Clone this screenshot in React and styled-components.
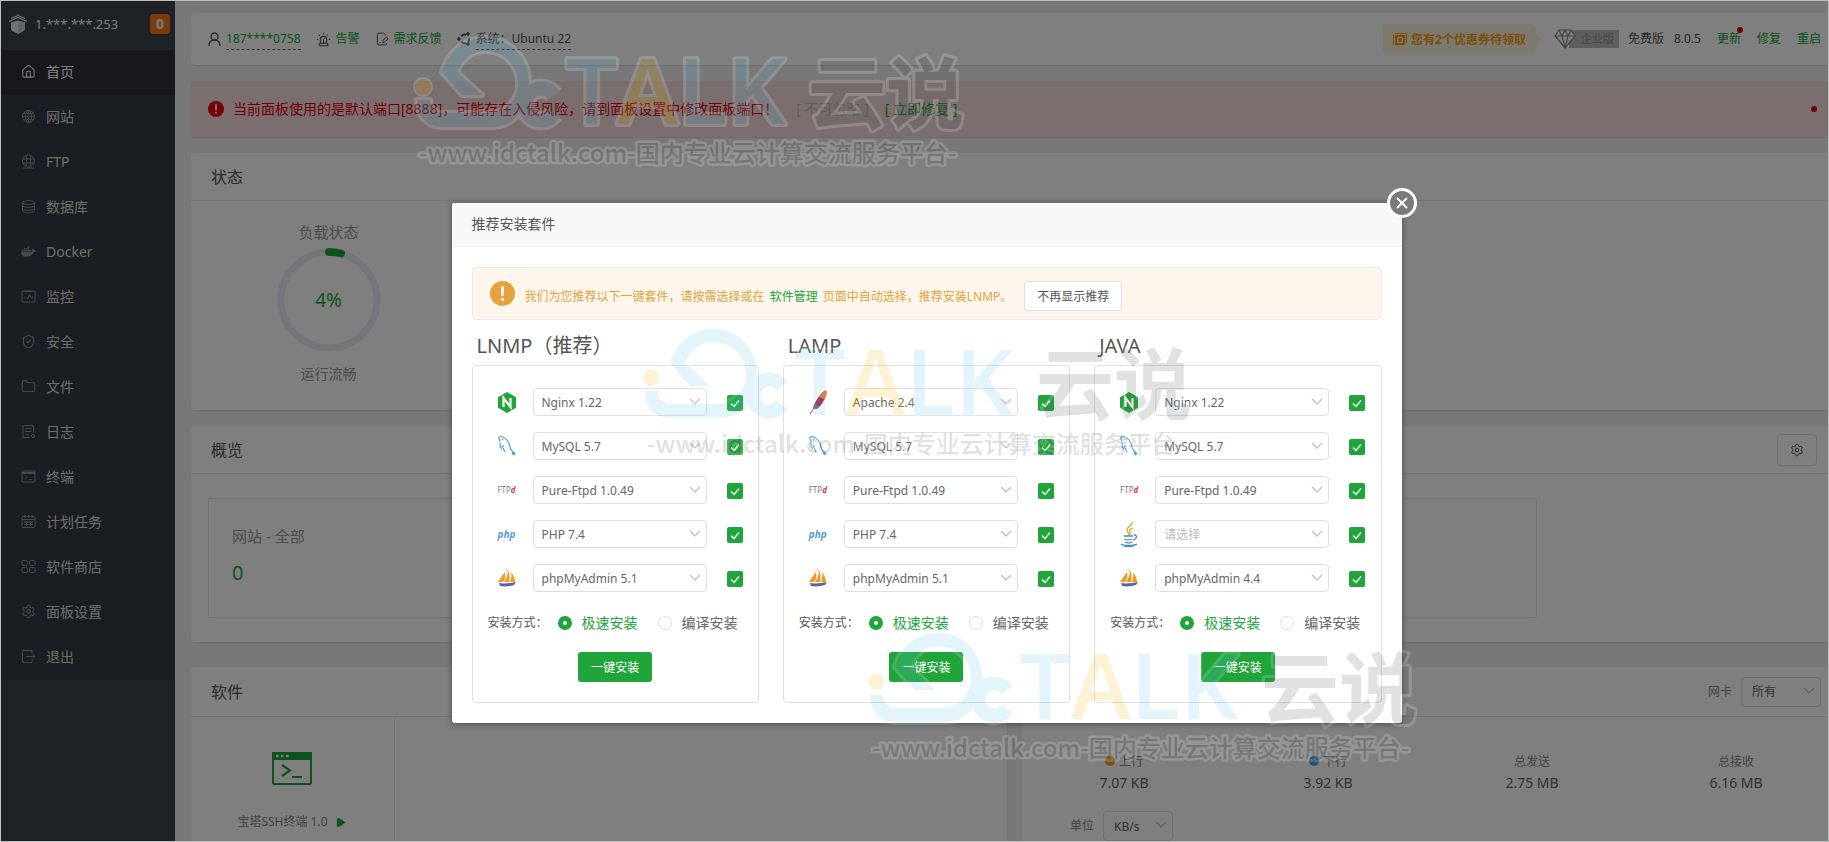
import React from "react";
import styled, { createGlobalStyle, css } from "styled-components";
import { House, ShieldCheck, Folder, Settings, Siren, FilePenLine, X, Play } from "lucide-react";
import { FaDocker } from "react-icons/fa";

const GREEN = "#20a53a";

const GlobalStyle = createGlobalStyle`
  * { box-sizing: border-box; }
  body {
    margin: 0;
    font-family: "Noto Sans", "Noto Sans CJK SC", sans-serif;
    font-size: 12px;
    line-height: 20px;
    color: #555;
    background: #f0f0f0;
  }
  button, select, input { font-family: inherit; font-size: inherit; margin: 0; }
  h1, h2, h3, p, ul { margin: 0; padding: 0; font-weight: 400; }
  a { color: inherit; text-decoration: none; }
  svg { flex: none; display: block; }
`;

const Frame = styled.div`
  position: relative;
  display: flex;
  height: 100vh;
  overflow: hidden;
  border: 1px solid #bcc0bf;
  background: #f0f0f0;
`;

/* Sidebar */
const Sidebar = styled.aside`
  flex: none;
  width: 174px;
  background: #3c444d;
`;
const Host = styled.div`
  display: flex;
  align-items: center;
  height: 49px;
  padding: 0 5px 4px 8px;
  color: #f5f5f5;
  font-size: 14px;
  & > span { margin-left: 8px; flex: 1; font-size: 13px; }
`;
const Badge = styled.b`
  width: 20px;
  height: 20px;
  border-radius: 4px;
  background: #ff7516;
  text-align: center;
`;
const Menu = styled.ul`
  list-style: none;
  background: #353d44;
`;
const MenuLink = styled.a`
  display: flex;
  align-items: center;
  gap: 10px;
  height: 45px;
  padding: 0 0 2px 20px;
  font-size: 14px;
  color: ${(p) => (p.$active ? "#fff" : "#dadada")};
  background: ${(p) => (p.$active ? "#2c3036" : "transparent")};
  svg { color: ${(p) => (p.$active ? "#eee" : "#8d9096")}; }
`;

/* Page */
const Main = styled.main`
  flex: 1;
  min-width: 0;
  margin-right: -10px;
  padding: 12px 0 0 16px;
`;
const Card = styled.section`
  background: #fff;
  border-radius: 4px;
  box-shadow: 0 1px 1px #d8d8d8;
  margin-bottom: ${(p) => p.$gap || 16}px;
  height: ${(p) => p.$h}px;
`;
const CardHead = styled.header`
  display: flex;
  align-items: center;
  justify-content: space-between;
  height: ${(p) => p.$h || 48}px;
  padding: 0 ${(p) => p.$right || 20}px 0 20px;
  border-bottom: 1px solid #e6e6e6;
  h2 { font-size: 16px; color: #555; }
`;
const TopBar = styled(Card)`
  display: flex;
  align-items: center;
  padding: 0 17px;
`;
const InfoItem = styled.div`
  display: flex;
  align-items: center;
  gap: 5px;
  margin-right: 15px;
`;
const GreenLink = styled.a`
  position: relative;
  color: ${GREEN};
  ${(p) => p.$dashed && css`border-bottom: 1px dashed ${GREEN};`}
`;
const SystemName = styled.span`
  border-bottom: 1px dashed #666;
`;
const RightTools = styled.div`
  display: flex;
  align-items: center;
  margin-left: auto;
  color: #555;
`;
const Coupon = styled.button`
  position: relative;
  display: flex;
  align-items: center;
  gap: 4px;
  height: 30px;
  padding: 0 10px;
  margin-right: 18px;
  border: 0;
  border-radius: 4px;
  background: #fdf3de;
  color: #f2a012;
  font-weight: 700;
  &::after {
    content: "";
    position: absolute;
    left: 100%;
    top: 9px;
    border: 6px solid transparent;
    border-left-color: #fdf3de;
    border-right: 0;
  }
`;
const Edition = styled.span`
  display: flex;
  align-items: center;
  isolation: isolate;
  color: #999;
  margin-right: 9px;
  b {
    display: block;
    height: 18px;
    line-height: 17px;
    padding: 0 5px 0 12px;
    margin-left: -7px;
    background: #bdbdbd;
    color: #8f8f8f;
    font-size: 11px;
    font-weight: 400;
  }
  svg { z-index: 1; }
`;
const Version = styled.span`
  margin-right: ${(p) => p.$gap}px;
`;
const Links = styled.nav`
  display: flex;
  gap: 16px;
`;
const Dot = styled.i`
  width: 6px;
  height: 6px;
  border-radius: 50%;
  background: #e60012;
  ${(p) => p.$corner && css`position: absolute; right: -2px; top: -2px;`}
`;
const Warning = styled(Card)`
  display: flex;
  align-items: center;
  padding: 0 21px 0 17px;
  background: #f5dfdd;
  color: #e60012;
  font-size: 14px;
  p { margin-left: 9px; }
  span { color: #c4bcbc; margin: 0 16px 0 18px; }
  a { flex: 1; }
`;
const Load = styled.div`
  display: flex;
  flex-direction: column;
  align-items: center;
  width: 275px;
  padding-top: 21px;
  color: #999;
  font-size: 14px;
  h3 { font-size: 15px; }
`;
const Gauge = styled.div`
  display: grid;
  place-items: center;
  margin: 6px 0 12px;
  color: ${GREEN};
  font-size: 19px;
  & > * { grid-area: 1 / 1; }
`;
const GearButton = styled.button`
  display: grid;
  place-items: center;
  width: 40px;
  height: 32px;
  border: 1px solid #dcdfe6;
  border-radius: 4px;
  background: #fff;
  color: #555;
`;
const StatGrid = styled.div`
  margin: 24px 301px 0 17px;
`;
const Stat = styled.div`
  height: 120px;
  padding: 27px 23px;
  border: 1px solid #e8e8e8;
  border-radius: 2px;
  font-size: 15px;
  color: #999;
  strong {
    display: block;
    margin-top: 17px;
    font-size: 20px;
    font-weight: 400;
    color: ${GREEN};
  }
`;
const Bottom = styled.div`
  display: grid;
  grid-template-columns: 1fr 1fr;
  gap: 15px;
`;
const AppTile = styled.a`
  display: flex;
  flex-direction: column;
  align-items: center;
  width: 204px;
  height: 160px;
  padding: 35px 2px 0 0;
  border-right: 1px solid #e8e8e8;
  color: #888;
  span { display: flex; align-items: center; gap: 7px; margin-top: 27px; }
`;
const Field = styled.label`
  display: flex;
  align-items: center;
  gap: 9px;
  color: #888;
`;
const UnitRow = styled.div`
  display: flex;
  padding: 18px 0 0 48px;
`;
const Traffic = styled.div`
  display: grid;
  grid-template-columns: repeat(4, 1fr);
  padding-top: 35px;
  text-align: center;
  color: #888;
  strong { display: block; margin-top: 1px; font-size: 14px; font-weight: 400; color: #666; }
`;
const Legend = styled.i`
  display: inline-block;
  width: 10px;
  height: 10px;
  margin-right: 4px;
  border-radius: 50%;
  background: ${(p) => p.$color};
`;

/* Select box */
const SelectWrap = styled.span`
  position: relative;
  display: block;
  width: ${(p) => p.$w}px;
  select {
    appearance: none;
    display: block;
    width: 100%;
    height: ${(p) => p.$h || 28}px;
    padding: 0 24px 0 ${(p) => p.$pad || 8}px;
    border: 1px solid #dcdfe6;
    border-radius: 4px;
    background: #fff;
    color: ${(p) => (p.$empty ? "#bbb" : "#666")};
  }
  svg {
    position: absolute;
    right: 6px;
    top: 10px;
    pointer-events: none;
  }
`;

/* Modal */
const Overlay = styled.div`
  position: absolute;
  inset: 0;
  display: flex;
  justify-content: center;
  align-items: flex-start;
  padding: 202px 0 0 24px;
  background: rgba(0, 0, 0, 0.5);
`;
const Dialog = styled.div`
  position: relative;
  width: 950px;
  border-radius: 3px;
  background: #fff;
  box-shadow: 0 1px 6px rgba(0, 0, 0, 0.4);
`;
const DialogTitle = styled.h1`
  height: 44px;
  padding-left: 20px;
  line-height: 42px;
  font-size: 14px;
  border-bottom: 1px solid #eee;
  border-radius: 3px 3px 0 0;
  background: #f8f8f8;
`;
const Close = styled.button`
  position: absolute;
  right: -15px;
  top: -15px;
  display: grid;
  place-items: center;
  width: 30px;
  height: 30px;
  padding: 0;
  border: 3px solid #fff;
  border-radius: 50%;
  background: #7b7b7b;
  color: #fff;
`;
const DialogBody = styled.div`
  padding: 20px;
`;
const Notice = styled.div`
  display: flex;
  align-items: center;
  height: 53px;
  padding: 0 17px;
  border: 1px solid #ececec;
  border-radius: 4px;
  background: #fdf6ec;
  color: #e6a23c;
  p { margin: 6px 12px 0 10px; }
  a { color: ${GREEN}; margin: 0 2px; }
`;
const PlainButton = styled.button`
  height: 30px;
  width: 98px;
  margin-top: 4px;
  padding: 0;
  border: 1px solid #dcdfe6;
  border-radius: 3px;
  background: #fff;
  color: #555;
`;
const Suites = styled.div`
  display: grid;
  grid-template-columns: repeat(3, minmax(0, 1fr));
  gap: 24px;
  h2 { font-size: 20px; line-height: 28px; padding-left: 5px; margin: 12px 0 5px; }
`;
const SuiteBox = styled.div`
  padding: 22px 15px 20px;
  border: 1px solid #dcdfe6;
  border-radius: 4px;
`;
const Row = styled.div`
  display: flex;
  align-items: center;
  margin-bottom: 16px;
`;
const LogoCell = styled.span`
  display: grid;
  place-items: center;
  width: 38px;
  height: 28px;
  margin-right: 7px;
`;
const FtpMark = styled.span`
  font-size: 8px;
  color: #777;
  i { color: #e2343f; font-weight: 700; }
`;
const PhpMark = styled.i`
  font-size: 10px;
  font-weight: 700;
  color: #5a9bd5;
`;
const Tick = styled.span`
  position: relative;
  display: block;
  width: 16px;
  height: 16px;
  margin: 2px 0 0 20px;
  input {
    appearance: none;
    display: block;
    width: 16px;
    height: 16px;
    border-radius: 2px;
    background: ${GREEN};
  }
  svg { position: absolute; left: 2px; top: 2px; pointer-events: none; }
`;
const ModeRow = styled.div`
  display: flex;
  align-items: center;
  height: 20px;
  margin: 21px 0 19px;
  & > span { width: 70px; }
`;
const Radio = styled.label`
  display: flex;
  align-items: center;
  gap: 10px;
  margin-right: 20px;
  white-space: nowrap;
  font-size: 14px;
  color: ${(p) => (p.$on ? GREEN : "#666")};
  &:last-child { margin-right: 0; }
  input {
    appearance: none;
    width: 14px;
    height: 14px;
    border: 1px solid #dcdfe6;
    border-radius: 50%;
    background: #fff;
  }
  input:checked { border: 5px solid ${GREEN}; }
`;
const Install = styled.button`
  display: block;
  width: 74px;
  height: 30px;
  margin: 0 auto;
  padding: 0;
  border: 0;
  border-radius: 3px;
  background: ${GREEN};
  color: #fff;
`;
const Watermark = styled.svg`
  position: absolute;
  left: ${(p) => p.$x}px;
  top: ${(p) => p.$y}px;
  overflow: visible;
  opacity: 0.17;
  pointer-events: none;
`;

/* Drawings */
const Line = ({ size = 15, children }) => (
  <svg width={size} height={size} viewBox="0 0 15 15" fill="none" stroke="currentColor" strokeWidth="1">
    {children}
  </svg>
);
const SiteIcon = () => (
  <Line>
    <circle cx="7.500" cy="7.500" r="6" />
    <ellipse cx="7.500" cy="7.500" rx="3" ry="6" />
    <path d="M7.500 1.500v12M1.500 7.500h12M2.500 4.500h10M2.500 10.500h10" />
  </Line>
);
const FtpIcon = () => (
  <Line>
    <circle cx="7.500" cy="7" r="6" />
    <path d="M5.500 1.500v11M9.500 1.500v11M2 5h11M2 9h11M2 14h11" />
  </Line>
);
const DatabaseIcon = () => (
  <Line>
    <ellipse cx="7.500" cy="3.500" rx="6" ry="2" />
    <path d="M1.500 3.500v8c0 3 12 3 12 0v-8M1.500 6.500c0 2.500 12 2.500 12 0M1.500 9.500c0 2.500 12 2.500 12 0" />
  </Line>
);
const MonitorIcon = () => (
  <Line>
    <rect x="1" y="2" width="13" height="11" rx="1" />
    <path d="M4 2.500h7M2.500 9.500l2-1.500 2 2 2-4 2 3 2-1" />
  </Line>
);
const LogIcon = () => (
  <Line>
    <path d="M9 13.500H2v-12h10.500v7M4.500 4.500h6M4.500 7.500h6M4.500 10.500h3" />
    <circle cx="12" cy="12" r="1.500" />
  </Line>
);
const TermIcon = () => (
  <Line>
    <rect x="1" y="2" width="13" height="11" rx="1" />
    <path d="M1 4h13" strokeWidth="2" />
    <path d="M4 6.500l2 2-2 2M8 10.500h3" />
  </Line>
);
const CronIcon = () => (
  <Line>
    <rect x="1" y="2.500" width="13" height="11" rx="1" />
    <path d="M1 5.500h13M4 1v3M7.500 1v3M11 1v3M3 8h9M3 10.500h9M5.500 7v5M9.500 7v5" />
  </Line>
);
const StoreIcon = () => (
  <Line>
    <rect x="1" y="1.500" width="5.500" height="5" rx="1" />
    <rect x="8.500" y="1.500" width="5.500" height="5" rx="1" />
    <rect x="1" y="8.500" width="5.500" height="5" rx="1" />
    <rect x="8.500" y="8.500" width="5.500" height="5" rx="1" />
  </Line>
);
const ExitIcon = () => (
  <Line>
    <path d="M11 4.500v-3H1.500v12H11v-3M5 7.500h9M11.500 5l2.500 2.500-2.500 2.500" />
  </Line>
);
const UserIcon = () => (
  <svg width="13" height="15" viewBox="0 0 13 15" fill="none" stroke="#555" strokeWidth="1.300">
    <circle cx="6.500" cy="4.500" r="3.500" />
    <path d="M1 14c0-4 2-6 5.500-6S12 10 12 14" />
  </svg>
);
const CouponIcon = () => (
  <svg width="14" height="12" viewBox="0 0 14 12" fill="currentColor">
    <path d="M0 2h1v10H0zM2 0h12v1H2zM13 1h1v9h-1z" />
    <path d="M2 2h10v10H2z" />
    <path d="M4.500 4.500h5v5h-5z" fill="none" stroke="#fff" strokeWidth="1" />
    <path d="M6.500 6.500h1v1h-1z" fill="#fff" />
  </svg>
);
const Diamond = () => (
  <svg width="22" height="20" viewBox="0 0 22 20" fill="#fff" stroke="#8c8c8c" strokeWidth="1.200">
    <path d="M5 1h12l4 6-10 12L1 7z" />
    <path d="M1 7h20M5 1l3 6 3-6 3 6 3-6M8 7l3 12 3-12" fill="none" />
  </svg>
);
const Chevron = () => (
  <svg width="12" height="7" viewBox="0 0 12 7" fill="none" stroke="#b8bcc4" strokeWidth="1.200">
    <path d="M1 1l5 5 5-5" />
  </svg>
);
const CheckMark = () => (
  <svg width="12" height="12" viewBox="0 0 12 12" fill="none" stroke="#fff" strokeWidth="1.300">
    <path d="M2 6.500l3 3 5-6" />
  </svg>
);
const ShieldLogo = () => (
  <svg width="18" height="20" viewBox="0 0 18 20">
    <path d="M9 0v2M2 4.500l7-3 7 3M0 7.500l9-4 9 4" stroke="#ddd" strokeWidth="1.300" fill="none" />
    <path d="M2 8.500L9 6.500l7 2v6.500c0 2-4 3-7 5-3-2-7-3-7-5z" fill="#e6e6e6" />
    <path d="M9 6.500l7 2v6.500c0 2-4 3-7 5z" fill="#c4c4c4" />
  </svg>
);
const UbuntuMark = () => (
  <svg width="14" height="14" viewBox="0 0 14 14" fill="none" stroke="#555">
    <path d="M4.300 4.500A4.300 4.300 0 0 1 9 2.800M12.200 6.200A4.300 4.300 0 0 1 10.800 10M8.600 11.200A4.300 4.300 0 0 1 4.300 9.500" strokeWidth="2" />
    <circle cx="1.900" cy="7" r="1.300" fill="#555" />
    <circle cx="11" cy="1.900" r="1.300" fill="#555" />
    <circle cx="11" cy="12" r="1.300" fill="#555" />
  </svg>
);
const Alarm = ({ size, color }) => (
  <svg width={size} height={size} viewBox="0 0 24 24">
    <circle cx="12" cy="12" r="12" fill={color} />
    <path d="M12 6v7" stroke="#fff" strokeWidth="2.600" strokeLinecap="round" />
    <circle cx="12" cy="17.500" r="1.500" fill="#fff" />
  </svg>
);
const TerminalArt = () => (
  <svg width="40" height="33" viewBox="0 0 40 33">
    <rect x="1" y="1" width="38" height="31" rx="1" fill="none" stroke={GREEN} strokeWidth="2" />
    <path d="M0 0h40v8H0z" fill={GREEN} />
    <path d="M4 4h2.500M9 4h2.500M14 4h2.500" stroke="#fff" strokeWidth="2.500" />
    <path d="M10 13l8 5.500-8 5.500M20 25h10" fill="none" stroke={GREEN} strokeWidth="2.200" />
  </svg>
);
const Nginx = () => (
  <svg width="18" height="21" viewBox="0 0 18 21">
    <path d="M9 0l9 5.200v10.600L9 21 0 15.800V5.200z" fill={GREEN} />
    <path d="M5.500 15V6l7 9V6" fill="none" stroke="#fff" strokeWidth="2.200" />
  </svg>
);
const Apache = () => (
  <svg width="18" height="25" viewBox="0 0 18 25">
    <path d="M17 0c2 4-2 12-8 18l-5 1c0-5 8-17 13-19z" fill="#b01c3f" />
    <path d="M17 0c2 3 0 6-2 9l-5-2c2-3 5-6 7-7z" fill="#e8702a" />
    <path d="M4 19c0-2 1-4 2-6l4 4-2 2z" fill="#8a5a86" />
    <path d="M11 9L1 24" stroke="#74506f" strokeWidth="1" />
  </svg>
);
const Mysql = () => (
  <svg width="18" height="20" viewBox="0 0 18 20" fill="none" stroke="#3a9bd8" strokeWidth="1.100">
    <path d="M1 1c4-1 8 2 10 6 1 3 1 6 3 8 1 1 3 2 3 3l-3-1 2 2" />
    <path d="M1 1c-1 2 1 3 1 5 0 3 0 5 1 7l2-3c0 3 1 4 2 6" strokeDasharray="5 1" />
    <path d="M4 3l1 1" />
  </svg>
);
const Java = () => (
  <svg width="18" height="25" viewBox="0 0 18 25" fill="none" strokeWidth="1.300">
    <path d="M12 0c1 4-6 5-5 8 0 2 2 3 2 5M13 6c-3 1-4 2-3 4s0 2-1 3" stroke="#f09a1c" />
    <path d="M4 14h9M4 17c2 1 6 1 8 0M5 20c2 1 5 1 7 0M14 13c4 0 3 4-1 5M1 22c2 2 13 2 16 0M4 24c4 1 9 0 11-1" stroke="#3c8fd0" />
  </svg>
);
const Boat = () => (
  <svg width="18" height="18" viewBox="0 0 18 18">
    <path d="M7 3c1 4 0 8-2 10H0c2-3 4-6 7-10zM10 1c2 4 2 8 1 12H6c3-4 4-8 4-12zM13 3c3 4 4 7 4 10h-5c1-4 2-6 1-10z" fill="#f59a1d" />
    <path d="M5 0c3-1 5 1 4 3" stroke="#bbb" fill="none" />
    <path d="M1 14c5 1 12 0 17-1l-2 3c-4 1-9 2-14 1z" fill="#5d62a6" />
  </svg>
);

const D_SHAPE =
  "M27 35C33 14 50 1 70 1C95 1 114 21 114 45C114 70 100 90 76 90H26C12 90 2 78 2 63H15C15 71 20 76 28 76H74C92 76 103 62 103 46C103 28 89 14 70 14C58 14 47 22 42 35L67 58H47Z";
const C_SHAPE = "M139 58A16 16 0 1 0 139 77";

function Brand({ x, y }) {
  return (
    <Watermark $x={x} $y={y} width="550" height="135" aria-hidden="true">
      <g fill="none" stroke="#fff" strokeLinejoin="round">
        <path d={D_SHAPE} strokeWidth="6" />
        <path d={C_SHAPE} strokeWidth="20" />
        <circle cx="8" cy="50" r="7" strokeWidth="6" />
      </g>
      <path d={D_SHAPE} fill="#62c4ea" />
      <path d={C_SHAPE} fill="none" stroke="#62c4ea" strokeWidth="14" />
      <circle cx="8" cy="50" r="8" fill="#fbb905" />
      <g stroke="#fff" strokeLinejoin="round" paintOrder="stroke" fontWeight="700">
        <text x="151" y="87" fontSize="91" fontWeight="600" fontFamily="Open Sans, sans-serif" fill="#62c4ea" strokeWidth="6">
          T<tspan fill="#fbb905">A</tspan>LK
        </text>
        <g fontFamily="Noto Sans CJK SC, sans-serif" fill="#555">
          <text x="393" y="86" fontSize="78" strokeWidth="6">云说</text>
          <text x="4" y="125" fontSize="24" fontWeight="500" strokeWidth="5">-www.idctalk.com-国内专业云计算交流服务平台-</text>
        </g>
      </g>
    </Watermark>
  );
}

const MENU = [
  ["首页", House], ["网站", SiteIcon], ["FTP", FtpIcon], ["数据库", DatabaseIcon],
  ["Docker", FaDocker], ["监控", MonitorIcon], ["安全", ShieldCheck],
  ["文件", Folder], ["日志", LogIcon], ["终端", TermIcon],
  ["计划任务", CronIcon], ["软件商店", StoreIcon], ["面板设置", Settings],
  ["退出", ExitIcon],
];

const ftp = <FtpMark>FTP<i>d</i></FtpMark>;
const php = <PhpMark>php</PhpMark>;
const SUITES = [
  ["LNMP（推荐）", [[<Nginx />, "Nginx 1.22"], [<Mysql />, "MySQL 5.7"], [ftp, "Pure-Ftpd 1.0.49"], [php, "PHP 7.4"], [<Boat />, "phpMyAdmin 5.1"]]],
  ["LAMP", [[<Apache />, "Apache 2.4"], [<Mysql />, "MySQL 5.7"], [ftp, "Pure-Ftpd 1.0.49"], [php, "PHP 7.4"], [<Boat />, "phpMyAdmin 5.1"]]],
  ["JAVA", [[<Nginx />, "Nginx 1.22"], [<Mysql />, "MySQL 5.7"], [ftp, "Pure-Ftpd 1.0.49"], [<Java />, ""], [<Boat />, "phpMyAdmin 4.4"]]],
];
const TRAFFIC = [
  ["上行", "7.07 KB", "#f5a623"], ["下行", "3.92 KB", "#4aa3ec"],
  ["总发送", "2.75 MB"], ["总接收", "6.16 MB"],
];

function Select({ value, label, w, h, pad }) {
  return (
    <SelectWrap $w={w} $h={h} $pad={pad} $empty={!value}>
      <select aria-label={label} defaultValue={value || "请选择"}>
        <option>{value || "请选择"}</option>
      </select>
      <Chevron />
    </SelectWrap>
  );
}

function Suite({ title, items }) {
  return (
    <section>
      <h2>{title}</h2>
      <SuiteBox>
        {items.map(([logo, value], i) => (
          <Row key={i}>
            <LogoCell>{logo}</LogoCell>
            <Select value={value} label={`${title} ${value || "Java"}`} w={174} />
            <Tick>
              <input type="checkbox" defaultChecked aria-label={value || "Java"} />
              <CheckMark />
            </Tick>
          </Row>
        ))}
        <ModeRow>
          <span>安装方式：</span>
          <Radio $on><input type="radio" name={title} defaultChecked />极速安装</Radio>
          <Radio><input type="radio" name={title} />编译安装</Radio>
        </ModeRow>
        <Install>一键安装</Install>
      </SuiteBox>
    </section>
  );
}

export default function App() {
  return (
    <Frame>
      <GlobalStyle />
      <Sidebar>
        <Host><ShieldLogo /><span>1.***.***.253</span><Badge>0</Badge></Host>
        <Menu>
          {MENU.map(([name, Icon], i) => (
            <li key={name}>
              <MenuLink href="#" $active={i === 0}><Icon size={15} strokeWidth={1.7} />{name}</MenuLink>
            </li>
          ))}
        </Menu>
      </Sidebar>

      <Main>
        <TopBar $h={52}>
          <InfoItem><UserIcon /><GreenLink href="#" $dashed>187****0758</GreenLink></InfoItem>
          <InfoItem><Siren size={15} strokeWidth={1.7} /><GreenLink href="#">告警</GreenLink></InfoItem>
          <InfoItem><FilePenLine size={14} strokeWidth={1.7} /><GreenLink href="#">需求反馈</GreenLink></InfoItem>
          <InfoItem><UbuntuMark /><SystemName>系统：Ubuntu 22</SystemName></InfoItem>
          <RightTools>
            <Coupon><CouponIcon />您有2个优惠券待领取</Coupon>
            <Edition><Diamond /><b>企业版</b></Edition>
            <Version $gap={10}>免费版</Version>
            <Version $gap={16}>8.0.5</Version>
            <Links>
              <GreenLink href="#">更新<Dot $corner /></GreenLink>
              <GreenLink href="#">修复</GreenLink>
              <GreenLink href="#">重启</GreenLink>
            </Links>
          </RightTools>
        </TopBar>

        <Warning $h={56}>
          <Alarm size={16} color="#e60012" />
          <p>当前面板使用的是默认端口[8888]，可能存在入侵风险，请到面板设置中修改面板端口！</p>
          <span>[ 不可忽略 ]</span>
          <GreenLink href="#">[ 立即修复 ]</GreenLink>
          <Dot />
        </Warning>

        <Card $h={257}>
          <CardHead><h2>状态</h2></CardHead>
          <Load>
            <h3>负载状态</h3>
            <Gauge>
              <svg width="104" height="104" viewBox="0 0 104 104" fill="none">
                <circle cx="52" cy="52" r="48" stroke="#ebebf5" strokeWidth="7" />
                <path d="M52 4A48 48 0 0 1 64 5.500" stroke={GREEN} strokeWidth="8" strokeLinecap="round" />
              </svg>
              <span>4%</span>
            </Gauge>
            <p>运行流畅</p>
          </Load>
        </Card>

        <Card $h={216} $gap={25}>
          <CardHead $right={21}>
            <h2>概览</h2>
            <GearButton aria-label="设置"><Settings size={14} strokeWidth={1.7} /></GearButton>
          </CardHead>
          <StatGrid>
            <Stat>网站 - 全部<strong>0</strong></Stat>
          </StatGrid>
        </Card>

        <Bottom>
          <Card $h={260}>
            <CardHead $h={50}><h2>软件</h2></CardHead>
            <AppTile href="#">
              <TerminalArt />
              <span>宝塔SSH终端 1.0<Play size={11} fill={GREEN} color={GREEN} /></span>
            </AppTile>
          </Card>
          <Card $h={260}>
            <CardHead $h={50} $right={17}>
              <h2 />
              <Field>网卡<Select value="所有" label="网卡" w={80} h={30} pad={10} /></Field>
            </CardHead>
            <Traffic>
              {TRAFFIC.map(([name, value, color]) => (
                <div key={name}>{color && <Legend $color={color} />}{name}<strong>{value}</strong></div>
              ))}
            </Traffic>
            <UnitRow><Field>单位<Select value="KB/s" label="单位" w={70} h={30} pad={10} /></Field></UnitRow>
          </Card>
        </Bottom>
      </Main>

      <Overlay>
        <Dialog role="dialog" aria-label="推荐安装套件">
          <DialogTitle>推荐安装套件</DialogTitle>
          <Close aria-label="关闭"><X size={18} strokeWidth={2.5} /></Close>
          <DialogBody>
            <Notice>
              <Alarm size={25} color="#e6a23c" />
              <p>我们为您推荐以下一键套件，请按需选择或在 <a href="#">软件管理</a> 页面中自动选择，推荐安装LNMP。</p>
              <PlainButton>不再显示推荐</PlainButton>
            </Notice>
            <Suites>
              {SUITES.map(([title, items]) => <Suite key={title} title={title} items={items} />)}
            </Suites>
          </DialogBody>
        </Dialog>
      </Overlay>

      <Brand x={414} y={36} />
      <Brand x={642} y={327} />
      <Brand x={867} y={631} />
    </Frame>
  );
}
